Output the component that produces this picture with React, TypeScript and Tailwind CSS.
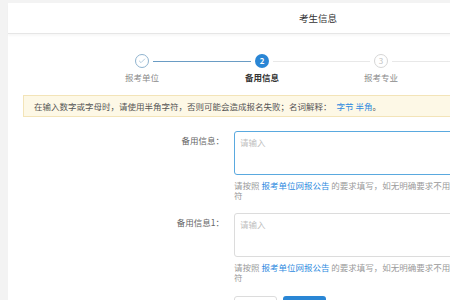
import { Check } from "lucide-react"

const font = { fontFamily: '"Noto Sans CJK SC", "Noto Sans", sans-serif' }

const Step = ({ n, label, state }: { n: number; label: string; state: "done" | "active" | "todo" }) => {
    return (
        <div className="flex flex-col items-center w-[14px] shrink-0">
            {state === "done" && (
                <div className="w-[14px] h-[14px] rounded-full border border-[#8fb3cf] flex items-center justify-center">
                    <Check size={8} strokeWidth={2} className="text-[#8fb3cf]" />
                </div>
            )}
            {state === "active" && (
                <div className="w-[14px] h-[14px] rounded-full bg-[#2a86d5] flex items-center justify-center text-white text-[8px] font-bold leading-none">
                    {n}
                </div>
            )}
            {state === "todo" && (
                <div className="w-[14px] h-[14px] rounded-full border border-[#d6d6d6] flex items-center justify-center text-[#c2c2c2] text-[8px] leading-none">
                    {n}
                </div>
            )}
            <div
                className={
                    state === "active"
                        ? "mt-[3px] whitespace-nowrap text-[8.5px] leading-[12px] text-[#333] font-bold"
                        : "mt-[3px] whitespace-nowrap text-[8.5px] leading-[12px] text-[#8a8a8a]"
                }
            >
                {label}
            </div>
        </div>
    )
}

const Field = ({ label, focused }: { label: string; focused?: boolean }) => {
    return (
        <div className="flex">
            <div className="w-[216px] shrink-0 text-right text-[8.5px] leading-[12px] text-[#666] pt-[3px]">{label}</div>
            <div className="ml-[10px] w-[400px]">
                <div
                    className={
                        focused
                            ? "h-[44px] rounded-[3px] border border-[#5aa9df] px-[5px] pt-[4px] text-[8.5px] leading-[12px] text-[#c0c0c0]"
                            : "h-[44px] rounded-[3px] border border-[#dcdcdc] px-[5px] pt-[4px] text-[8.5px] leading-[12px] text-[#c0c0c0]"
                    }
                >
                    请输入
                </div>
                <div className="mt-[5px] text-[8.5px] leading-[10px] text-[#9a9a9a]">
                    <div className="whitespace-nowrap">
                        请按照 <span className="text-[#2d8ae0]">报考单位网报公告</span> 的要求填写，如无明确要求不用填写，请勿输入特殊字
                    </div>
                    <div>符</div>
                </div>
            </div>
        </div>
    )
}

export default function App() {
    return (
        <div className="w-[450px] h-[300px] overflow-hidden bg-[#f3f3f3] pl-2 pt-[3px]" style={font}>
            <div className="w-[620px] min-h-[400px] bg-white">
                <header className="h-[31px] flex items-center justify-center text-[9.5px] text-[#333] border-b border-[#e6e6e6] shadow-[0_2px_2px_rgba(0,0,0,0.03)]">
                    考生信息
                </header>

                <div className="flex items-start pt-[20px] pl-[127px]">
                    <Step n={1} label="报考单位" state="done" />
                    <div className="h-px w-[98px] mx-[4px] mt-[7px] bg-[#6a9cc4] shrink-0"></div>
                    <Step n={2} label="备用信息" state="active" />
                    <div className="h-px w-[97px] mx-[4px] mt-[7px] bg-[#e8e8e8] shrink-0"></div>
                    <Step n={3} label="报考专业" state="todo" />
                    <div className="h-px w-[120px] ml-[4px] mt-[7px] bg-[#e8e8e8] shrink-0"></div>
                </div>

                <div className="mt-[12px] mx-[15px] h-[22px] flex items-center pl-[10px] bg-[#fdf8e6] border border-[#f3e4b8] text-[8.5px] text-[#555] whitespace-nowrap">
                    在输入数字或字母时，请使用半角字符，否则可能会造成报名失败；名词解释：
                    <span className="ml-[5px] text-[#2d8ae0]">字节 半角</span>。
                </div>

                <div className="mt-[14px]">
                    <Field label="备用信息：" focused />
                </div>
                <div className="mt-[13px]">
                    <Field label="备用信息1：" />
                </div>

                <div className="flex gap-[6px] pl-[226px] mt-[14px]">
                    <button className="w-[43px] h-[22px] rounded-[3px] border border-[#dcdcdc] bg-white text-[8.5px] text-[#666]">上一步</button>
                    <button className="w-[43px] h-[22px] rounded-[3px] bg-[#2a86d5] text-[8.5px] text-white">下一步</button>
                </div>
            </div>
        </div>
    )
}
